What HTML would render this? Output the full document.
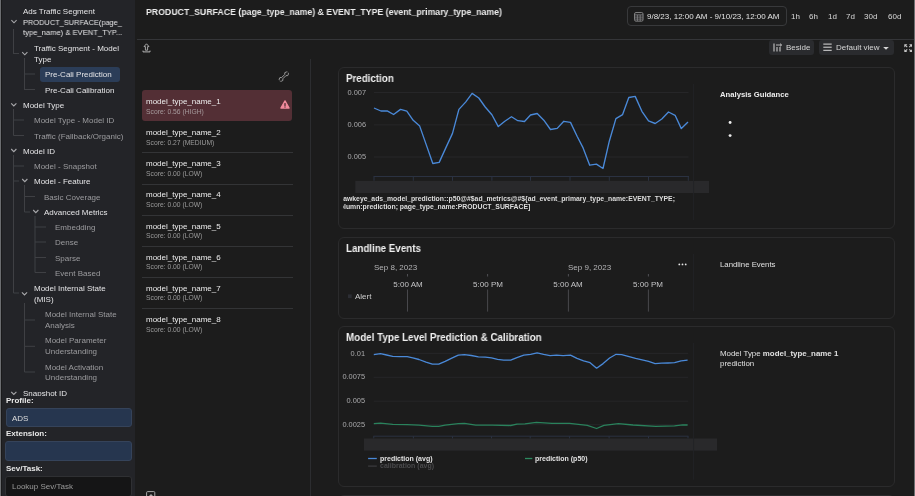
<!DOCTYPE html>
<html><head><meta charset="utf-8"><title>Ads Traffic Segment</title>
<style>
html,body{margin:0;padding:0;width:915px;height:496px;overflow:hidden;background:#1c1c1c}
body{position:relative;font-family:"Liberation Sans",sans-serif}
.t{position:absolute;white-space:pre;will-change:transform}
.r{position:absolute;box-sizing:content-box}
</style></head><body>
<div class="r" style="left:0px;top:0px;width:135.00px;height:496.00px;background:#232428;border-radius:0px;"></div>
<div class="r" style="left:0px;top:0px;width:1.20px;height:496.00px;background:#6b6d70;border-radius:0px;"></div>
<div class="r" style="left:1.2px;top:0px;width:1.00px;height:496.00px;background:#1a1a1b;border-radius:0px;"></div>
<svg class="r" style="left:0;top:0;clip-path:inset(0 0 100.6px 0)" width="135" height="496"><line x1="13.5" y1="29" x2="13.5" y2="54" stroke="#3f4044" stroke-width="1"/><line x1="13.5" y1="53.5" x2="19" y2="53.5" stroke="#3f4044" stroke-width="1"/><line x1="24.5" y1="58" x2="24.5" y2="90" stroke="#3f4044" stroke-width="1"/><line x1="24.5" y1="74" x2="35" y2="74" stroke="#3f4044" stroke-width="1"/><line x1="24.5" y1="89.5" x2="35" y2="89.5" stroke="#3f4044" stroke-width="1"/><line x1="13.5" y1="109" x2="13.5" y2="135.5" stroke="#3f4044" stroke-width="1"/><line x1="13.5" y1="120" x2="24" y2="120" stroke="#3f4044" stroke-width="1"/><line x1="13.5" y1="135.5" x2="24" y2="135.5" stroke="#3f4044" stroke-width="1"/><line x1="13.5" y1="155" x2="13.5" y2="293" stroke="#3f4044" stroke-width="1"/><line x1="13.5" y1="166" x2="24" y2="166" stroke="#3f4044" stroke-width="1"/><line x1="13.5" y1="181" x2="19" y2="181" stroke="#3f4044" stroke-width="1"/><line x1="13.5" y1="293" x2="19" y2="293" stroke="#3f4044" stroke-width="1"/><line x1="24.5" y1="185" x2="24.5" y2="212" stroke="#3f4044" stroke-width="1"/><line x1="24.5" y1="196.5" x2="35" y2="196.5" stroke="#3f4044" stroke-width="1"/><line x1="24.5" y1="212" x2="30" y2="212" stroke="#3f4044" stroke-width="1"/><line x1="35" y1="216" x2="35" y2="272.5" stroke="#3f4044" stroke-width="1"/><line x1="35" y1="227" x2="46" y2="227" stroke="#3f4044" stroke-width="1"/><line x1="35" y1="242" x2="46" y2="242" stroke="#3f4044" stroke-width="1"/><line x1="35" y1="257.5" x2="46" y2="257.5" stroke="#3f4044" stroke-width="1"/><line x1="35" y1="272.5" x2="46" y2="272.5" stroke="#3f4044" stroke-width="1"/><line x1="24.5" y1="303" x2="24.5" y2="372" stroke="#3f4044" stroke-width="1"/><line x1="24.5" y1="320" x2="35" y2="320" stroke="#3f4044" stroke-width="1"/><line x1="24.5" y1="346.3" x2="35" y2="346.3" stroke="#3f4044" stroke-width="1"/><line x1="24.5" y1="372" x2="35" y2="372" stroke="#3f4044" stroke-width="1"/><path d="M11.4,20.1 L14,22.8 L16.6,20.1" fill="none" stroke="#a8a8ab" stroke-width="1.1"/><path d="M22.2,52.1 L24.8,54.800000000000004 L27.400000000000002,52.1" fill="none" stroke="#a8a8ab" stroke-width="1.1"/><path d="M11.200000000000001,103.3 L13.8,106.0 L16.400000000000002,103.3" fill="none" stroke="#a8a8ab" stroke-width="1.1"/><path d="M11.200000000000001,149.0 L13.8,151.7 L16.400000000000002,149.0" fill="none" stroke="#a8a8ab" stroke-width="1.1"/><path d="M22.2,179.0 L24.8,181.7 L27.400000000000002,179.0" fill="none" stroke="#a8a8ab" stroke-width="1.1"/><path d="M33.199999999999996,210.0 L35.8,212.7 L38.4,210.0" fill="none" stroke="#a8a8ab" stroke-width="1.1"/><path d="M21.9,292.3 L24.5,295.0 L27.1,292.3" fill="none" stroke="#a8a8ab" stroke-width="1.1"/><path d="M11.200000000000001,391.8 L13.8,394.5 L16.400000000000002,391.8" fill="none" stroke="#a8a8ab" stroke-width="1.1"/></svg>
<div class="r" style="left:40px;top:67px;width:79.50px;height:14.60px;background:#2b3d58;border-radius:3px;"></div>
<div class="t" style="left:22.8px;top:6.98px;font-size:8px;line-height:9.6px;font-weight:normal;color:#e4e4e6;">Ads Traffic Segment</div>
<div class="t" style="left:22.8px;top:17.88px;font-size:8px;line-height:9.6px;font-weight:normal;color:#e4e4e6;transform:scaleX(0.927);transform-origin:0 0">PRODUCT_SURFACE(page_</div>
<div class="t" style="left:22.8px;top:28.48px;font-size:8px;line-height:9.6px;font-weight:normal;color:#e4e4e6;transform:scaleX(0.952);transform-origin:0 0">type_name) &amp; EVENT_TYP...</div>
<div class="t" style="left:33.9px;top:44.18px;font-size:8px;line-height:9.6px;font-weight:normal;color:#e4e4e6;">Traffic Segment - Model</div>
<div class="t" style="left:33.9px;top:55.18px;font-size:8px;line-height:9.6px;font-weight:normal;color:#e4e4e6;">Type</div>
<div class="t" style="left:44.9px;top:70.18px;font-size:8px;line-height:9.6px;font-weight:normal;color:#e4e4e6;">Pre-Cali Prediction</div>
<div class="t" style="left:44.9px;top:85.68px;font-size:8px;line-height:9.6px;font-weight:normal;color:#e4e4e6;">Pre-Cali Calibration</div>
<div class="t" style="left:22.7px;top:101.28px;font-size:8px;line-height:9.6px;font-weight:normal;color:#e4e4e6;">Model Type</div>
<div class="t" style="left:33.6px;top:116.28px;font-size:8px;line-height:9.6px;font-weight:normal;color:#9c9c9f;">Model Type - Model ID</div>
<div class="t" style="left:33.6px;top:131.78px;font-size:8px;line-height:9.6px;font-weight:normal;color:#9c9c9f;">Traffic (Fallback/Organic)</div>
<div class="t" style="left:22.7px;top:147.18px;font-size:8px;line-height:9.6px;font-weight:normal;color:#e4e4e6;">Model ID</div>
<div class="t" style="left:33.6px;top:162.18px;font-size:8px;line-height:9.6px;font-weight:normal;color:#9c9c9f;">Model - Snapshot</div>
<div class="t" style="left:33.7px;top:177.18px;font-size:8px;line-height:9.6px;font-weight:normal;color:#e4e4e6;">Model - Feature</div>
<div class="t" style="left:44.3px;top:192.58px;font-size:8px;line-height:9.6px;font-weight:normal;color:#9c9c9f;">Basic Coverage</div>
<div class="t" style="left:44.3px;top:207.68px;font-size:8px;line-height:9.6px;font-weight:normal;color:#e4e4e6;">Advanced Metrics</div>
<div class="t" style="left:55.4px;top:223.18px;font-size:8px;line-height:9.6px;font-weight:normal;color:#9c9c9f;">Embedding</div>
<div class="t" style="left:55.4px;top:238.18px;font-size:8px;line-height:9.6px;font-weight:normal;color:#9c9c9f;">Dense</div>
<div class="t" style="left:55.4px;top:253.58px;font-size:8px;line-height:9.6px;font-weight:normal;color:#9c9c9f;">Sparse</div>
<div class="t" style="left:55.4px;top:268.58px;font-size:8px;line-height:9.6px;font-weight:normal;color:#9c9c9f;">Event Based</div>
<div class="t" style="left:33.5px;top:283.78px;font-size:8px;line-height:9.6px;font-weight:normal;color:#e4e4e6;">Model Internal State</div>
<div class="t" style="left:33.5px;top:295.38px;font-size:8px;line-height:9.6px;font-weight:normal;color:#e4e4e6;">(MIS)</div>
<div class="t" style="left:44.8px;top:310.18px;font-size:8px;line-height:9.6px;font-weight:normal;color:#9c9c9f;">Model Internal State</div>
<div class="t" style="left:44.8px;top:321.18px;font-size:8px;line-height:9.6px;font-weight:normal;color:#9c9c9f;">Analysis</div>
<div class="t" style="left:44.8px;top:336.18px;font-size:8px;line-height:9.6px;font-weight:normal;color:#9c9c9f;">Model Parameter</div>
<div class="t" style="left:44.8px;top:346.98px;font-size:8px;line-height:9.6px;font-weight:normal;color:#9c9c9f;">Understanding</div>
<div class="t" style="left:44.8px;top:362.68px;font-size:8px;line-height:9.6px;font-weight:normal;color:#9c9c9f;">Model Activation</div>
<div class="t" style="left:44.8px;top:373.48px;font-size:8px;line-height:9.6px;font-weight:normal;color:#9c9c9f;">Understanding</div>
<div class="r" style="left:0;top:380px;width:135px;height:15.5px;overflow:hidden"><div class="t" style="left:22.7px;top:9.48px;font-size:8px;line-height:9.6px;font-weight:normal;color:#e4e4e6;">Snapshot ID</div></div>
<div class="t" style="left:5.5px;top:395.88px;font-size:8px;line-height:9.6px;font-weight:bold;color:#e8e8e8;">Profile:</div>
<div class="r" style="left:5.5px;top:408.3px;width:124.30px;height:17.10px;background:#26364f;border:1px solid #35435a;border-radius:3px;"></div>
<div class="t" style="left:11.9px;top:413.98px;font-size:8px;line-height:9.6px;font-weight:normal;color:#dcdcdc;">ADS</div>
<div class="t" style="left:5.6px;top:428.98px;font-size:8px;line-height:9.6px;font-weight:bold;color:#e8e8e8;">Extension:</div>
<div class="r" style="left:5.4px;top:441px;width:124.50px;height:17.60px;background:#26364f;border:1px solid #35435a;border-radius:3px;"></div>
<div class="t" style="left:5.6px;top:463.78px;font-size:8px;line-height:9.6px;font-weight:bold;color:#e8e8e8;">Sev/Task:</div>
<div class="r" style="left:5.4px;top:476.3px;width:124.50px;height:18.70px;background:#151516;border:1px solid #2f3033;border-radius:3px;"></div>
<div class="t" style="left:11.9px;top:482.18px;font-size:8px;line-height:9.6px;font-weight:normal;color:#9a9a9a;">Lookup Sev/Task</div>
<div class="r" style="left:135px;top:0px;width:780.00px;height:496.00px;background:#1c1c1c;border-radius:0px;"></div>
<div class="r" style="left:913.8px;top:0px;width:1.20px;height:496.00px;background:#6d6e70;border-radius:0px;"></div>
<div class="r" style="left:137px;top:39px;width:776.80px;height:1.00px;background:#343538;border-radius:0px;"></div>
<div class="t" style="left:146px;top:6.11px;font-size:9.5px;line-height:11.4px;font-weight:bold;color:#ececec;transform:scaleX(0.921);transform-origin:0 0">PRODUCT_SURFACE (page_type_name) &amp; EVENT_TYPE (event_primary_type_name)</div>
<div class="r" style="left:626.5px;top:6.3px;width:158.50px;height:18.10px;background:none;border:1px solid #38393b;border-radius:4px;"></div>
<svg class="r" style="left:633.5px;top:12px" width="10" height="10" viewBox="0 0 10 10"><rect x="0.55" y="0.55" width="8.5" height="8.6" rx="1.4" fill="none" stroke="#8e8e90" stroke-width="0.9"/><line x1="0.6" y1="2.9" x2="9" y2="2.9" stroke="#8e8e90" stroke-width="0.8"/><line x1="0.6" y1="5.1" x2="9" y2="5.1" stroke="#8e8e90" stroke-width="0.7"/><line x1="0.6" y1="7.1" x2="9" y2="7.1" stroke="#8e8e90" stroke-width="0.7"/><line x1="3.4" y1="2.9" x2="3.4" y2="9" stroke="#8e8e90" stroke-width="0.7"/><line x1="6.2" y1="2.9" x2="6.2" y2="9" stroke="#8e8e90" stroke-width="0.7"/></svg>
<div class="t" style="left:646.8px;top:11.98px;font-size:8px;line-height:9.6px;font-weight:normal;color:#e2e2e2;">9/8/23, 12:00 AM - 9/10/23, 12:00 AM</div>
<div class="t" style="left:791.4px;top:11.98px;font-size:8px;line-height:9.6px;font-weight:normal;color:#d8d8d8;">1h</div>
<div class="t" style="left:808.8px;top:11.98px;font-size:8px;line-height:9.6px;font-weight:normal;color:#d8d8d8;">6h</div>
<div class="t" style="left:827.8px;top:11.98px;font-size:8px;line-height:9.6px;font-weight:normal;color:#d8d8d8;">1d</div>
<div class="t" style="left:845.6px;top:11.98px;font-size:8px;line-height:9.6px;font-weight:normal;color:#d8d8d8;">7d</div>
<div class="t" style="left:864.2px;top:11.98px;font-size:8px;line-height:9.6px;font-weight:normal;color:#d8d8d8;">30d</div>
<div class="t" style="left:888px;top:11.98px;font-size:8px;line-height:9.6px;font-weight:normal;color:#d8d8d8;">60d</div>
<svg class="r" style="left:141.5px;top:42.5px" width="9" height="10" viewBox="0 0 9 10"><path d="M4.5,0.8 L7,3.6 L5.6,3.6 L5.6,7.2 L3.4,7.2 L3.4,3.6 L2,3.6 Z" fill="none" stroke="#b5b5b5" stroke-width="0.9" stroke-linejoin="round"/><path d="M1,7.6 L1,8.9 L8,8.9 L8,7.6" fill="none" stroke="#b5b5b5" stroke-width="1"/></svg>
<div class="r" style="left:768.6px;top:40.1px;width:45.60px;height:14.80px;background:#2a2b2e;border-radius:3px;"></div>
<svg class="r" style="left:772.5px;top:43px" width="10" height="9" viewBox="0 0 10 9"><line x1="1" y1="0.5" x2="1" y2="8.5" stroke="#c8c8c8" stroke-width="1.1"/><line x1="4" y1="4" x2="4" y2="8.5" stroke="#c8c8c8" stroke-width="1.1"/><line x1="7" y1="4" x2="7" y2="8.5" stroke="#c8c8c8" stroke-width="1.1"/><path d="M3,2 L8.5,2 M7,0.6 L8.6,2 L7,3.4" fill="none" stroke="#c8c8c8" stroke-width="0.9"/></svg>
<div class="t" style="left:785.8px;top:43.48px;font-size:8px;line-height:9.6px;font-weight:normal;color:#d6d6d6;">Beside</div>
<div class="r" style="left:819px;top:40.1px;width:75.20px;height:14.80px;background:#2a2b2e;border-radius:3px;"></div>
<svg class="r" style="left:822.5px;top:43px" width="9" height="8" viewBox="0 0 9 8"><line x1="0.3" y1="1.1" x2="8.7" y2="1.1" stroke="#dcdcdc" stroke-width="1"/><line x1="0.3" y1="4.2" x2="8.7" y2="4.2" stroke="#dcdcdc" stroke-width="1"/><line x1="0.3" y1="7.3" x2="8.7" y2="7.3" stroke="#dcdcdc" stroke-width="1"/></svg>
<div class="t" style="left:835.8px;top:43.48px;font-size:8px;line-height:9.6px;font-weight:normal;color:#d6d6d6;">Default view</div>
<svg class="r" style="left:883px;top:46.5px" width="6" height="3" viewBox="0 0 6 3"><path d="M0.2,0 L5.8,0 L3,2.8 Z" fill="#d6d6d6"/></svg>
<svg class="r" style="left:903.5px;top:43.5px" width="8.5" height="8.5" viewBox="0 0 8.5 8.5"><path d="M0.3,0.3 L3.4,0.3 L0.3,3.4 Z M8.2,0.3 L5.1,0.3 L8.2,3.4 Z M8.2,8.2 L5.1,8.2 L8.2,5.1 Z M0.3,8.2 L3.4,8.2 L0.3,5.1 Z" fill="#c8c8c8"/><path d="M1.4,1.4 L3.2,3.2 M7.1,1.4 L5.3,3.2 M7.1,7.1 L5.3,5.3 M1.4,7.1 L3.2,5.3" stroke="#c8c8c8" stroke-width="1.1"/></svg>
<div class="r" style="left:310px;top:59px;width:1.00px;height:437.00px;background:#2c2d30;border-radius:0px;"></div>
<svg class="r" style="left:278px;top:71px" width="11" height="11" viewBox="0 0 11 11"><g transform="translate(5.8,5.6) rotate(-45)"><path d="M-2.2,-0.85 L2.2,-0.85 A1.9,1.9 0 1 1 2.2,0.85 L-2.2,0.85 A1.9,1.9 0 1 1 -2.2,-0.85 Z" fill="none" stroke="#a6a6a6" stroke-width="0.85"/><rect x="4.6" y="-0.55" width="2" height="1.1" fill="#1c1c1c"/><rect x="-6.6" y="-0.55" width="2" height="1.1" fill="#1c1c1c"/></g></svg>
<div class="r" style="left:141.9px;top:89.5px;width:150.60px;height:31.30px;background:#532f35;border-radius:3px;"></div>
<svg class="r" style="left:279.5px;top:99.5px" width="10" height="9" viewBox="0 0 10 9"><path d="M5,0.9 L9.1,8.0 L0.9,8.0 Z" fill="#f08a9c" stroke="#f08a9c" stroke-width="1.3" stroke-linejoin="round"/><rect x="4.35" y="3.0" width="1.3" height="3.0" rx="0.5" fill="#4a2a30"/><circle cx="5" cy="7" r="0.7" fill="#4a2a30"/></svg>
<div class="t" style="left:146px;top:96.98px;font-size:8px;line-height:9.6px;font-weight:normal;color:#ececec;">model_type_name_1</div>
<div class="t" style="left:146px;top:107.56px;font-size:6.75px;line-height:8.1px;font-weight:normal;color:#a69a9c;">Score: 0.56 (HIGH)</div>
<div class="t" style="left:146px;top:128.13px;font-size:8px;line-height:9.6px;font-weight:normal;color:#ececec;">model_type_name_2</div>
<div class="t" style="left:146px;top:138.71px;font-size:6.75px;line-height:8.1px;font-weight:normal;color:#9a9a9a;">Score: 0.27 (MEDIUM)</div>
<div class="r" style="left:141.8px;top:152.35px;width:150.90px;height:1.00px;background:#333436;border-radius:0px;"></div>
<div class="t" style="left:146px;top:159.28px;font-size:8px;line-height:9.6px;font-weight:normal;color:#ececec;">model_type_name_3</div>
<div class="t" style="left:146px;top:169.86px;font-size:6.75px;line-height:8.1px;font-weight:normal;color:#9a9a9a;">Score: 0.00 (LOW)</div>
<div class="r" style="left:141.8px;top:183.5px;width:150.90px;height:1.00px;background:#333436;border-radius:0px;"></div>
<div class="t" style="left:146px;top:190.43px;font-size:8px;line-height:9.6px;font-weight:normal;color:#ececec;">model_type_name_4</div>
<div class="t" style="left:146px;top:201.01px;font-size:6.75px;line-height:8.1px;font-weight:normal;color:#9a9a9a;">Score: 0.00 (LOW)</div>
<div class="r" style="left:141.8px;top:214.65px;width:150.90px;height:1.00px;background:#333436;border-radius:0px;"></div>
<div class="t" style="left:146px;top:221.58px;font-size:8px;line-height:9.6px;font-weight:normal;color:#ececec;">model_type_name_5</div>
<div class="t" style="left:146px;top:232.16px;font-size:6.75px;line-height:8.1px;font-weight:normal;color:#9a9a9a;">Score: 0.00 (LOW)</div>
<div class="r" style="left:141.8px;top:245.79999999999998px;width:150.90px;height:1.00px;background:#333436;border-radius:0px;"></div>
<div class="t" style="left:146px;top:252.73px;font-size:8px;line-height:9.6px;font-weight:normal;color:#ececec;">model_type_name_6</div>
<div class="t" style="left:146px;top:263.31px;font-size:6.75px;line-height:8.1px;font-weight:normal;color:#9a9a9a;">Score: 0.00 (LOW)</div>
<div class="r" style="left:141.8px;top:276.95px;width:150.90px;height:1.00px;background:#333436;border-radius:0px;"></div>
<div class="t" style="left:146px;top:283.88px;font-size:8px;line-height:9.6px;font-weight:normal;color:#ececec;">model_type_name_7</div>
<div class="t" style="left:146px;top:294.46px;font-size:6.75px;line-height:8.1px;font-weight:normal;color:#9a9a9a;">Score: 0.00 (LOW)</div>
<div class="r" style="left:141.8px;top:308.09999999999997px;width:150.90px;height:1.00px;background:#333436;border-radius:0px;"></div>
<div class="t" style="left:146px;top:315.03px;font-size:8px;line-height:9.6px;font-weight:normal;color:#ececec;">model_type_name_8</div>
<div class="t" style="left:146px;top:325.61px;font-size:6.75px;line-height:8.1px;font-weight:normal;color:#9a9a9a;">Score: 0.00 (LOW)</div>
<svg class="r" style="left:145.5px;top:490.5px" width="10" height="6" viewBox="0 0 10 6"><rect x="0.6" y="0.6" width="8.2" height="8" rx="1" fill="none" stroke="#a8a8a8" stroke-width="1"/><path d="M5,3 L7,5 L3,5 Z" fill="#a8a8a8"/></svg>
<div class="r" style="left:338px;top:67.1px;width:555.20px;height:159.90px;background:#1c1c1c;border:1px solid #2b2b2c;border-radius:6px;"></div>
<div class="r" style="left:338px;top:237.3px;width:555.20px;height:79.40px;background:#1c1c1c;border:1px solid #2b2b2c;border-radius:6px;"></div>
<div class="r" style="left:338px;top:325.8px;width:555.20px;height:159.70px;background:#1c1c1c;border:1px solid #2b2b2c;border-radius:6px;"></div>
<div class="r" style="left:338px;top:494.6px;width:555.20px;height:63.40px;background:#1c1c1c;border:1px solid #2b2b2c;border-radius:6px;"></div>
<div class="t" style="left:345.8px;top:72.36px;font-size:10.5px;line-height:12.6px;font-weight:bold;color:#f0f0f0;transform:scaleX(0.93);transform-origin:0 0">Prediction</div>
<div class="t" style="left:305.5px;top:88.95px;font-size:7.4px;line-height:8.88px;font-weight:normal;color:#a9a9ab;width:60px;text-align:right">0.007</div>
<div class="t" style="left:305.5px;top:120.85px;font-size:7.4px;line-height:8.88px;font-weight:normal;color:#a9a9ab;width:60px;text-align:right">0.006</div>
<div class="t" style="left:305.5px;top:153.05px;font-size:7.4px;line-height:8.88px;font-weight:normal;color:#a9a9ab;width:60px;text-align:right">0.005</div>
<svg class="r" style="left:0;top:0" width="915" height="496"><line x1="374" y1="92.5" x2="688.5" y2="92.5" stroke="#262628" stroke-width="1"/><line x1="374" y1="124.9" x2="688.5" y2="124.9" stroke="#262628" stroke-width="1"/><line x1="374" y1="157" x2="688.5" y2="157" stroke="#262628" stroke-width="1"/><line x1="373.5" y1="176.5" x2="689" y2="176.5" stroke="#2b3242" stroke-width="1"/><line x1="374" y1="176.5" x2="374" y2="180.8" stroke="#2b3242" stroke-width="1"/><line x1="413.3" y1="176.5" x2="413.3" y2="180.8" stroke="#2b3242" stroke-width="1"/><line x1="452.5" y1="176.5" x2="452.5" y2="180.8" stroke="#2b3242" stroke-width="1"/><line x1="491.9" y1="176.5" x2="491.9" y2="180.8" stroke="#2b3242" stroke-width="1"/><line x1="530.5" y1="176.5" x2="530.5" y2="180.8" stroke="#2b3242" stroke-width="1"/><line x1="570" y1="176.5" x2="570" y2="180.8" stroke="#2b3242" stroke-width="1"/><line x1="609.3" y1="176.5" x2="609.3" y2="180.8" stroke="#2b3242" stroke-width="1"/><line x1="648.5" y1="176.5" x2="648.5" y2="180.8" stroke="#2b3242" stroke-width="1"/><line x1="688.3" y1="176.5" x2="688.3" y2="180.8" stroke="#2b3242" stroke-width="1"/><rect x="355.3" y="180.9" width="353.7" height="12.1" fill="#29292b"/><line x1="693.6" y1="84" x2="693.6" y2="220" stroke="#222326" stroke-width="1"/><polyline points="374.0,108.0 380.9,111.0 387.2,110.9 393.6,114.5 400.5,109.4 406.8,111.2 413.2,120.3 419.7,126.1 426.2,144.6 432.8,163.5 439.2,162.4 445.8,147.9 452.5,133.4 458.9,109.4 465.6,102.1 472.1,93.4 478.8,98.0 485.2,107.0 491.9,114.8 498.3,126.6 504.8,121.2 511.5,116.7 517.8,120.7 524.5,121.5 530.5,115.0 537.2,113.5 543.8,120.2 550.5,129.5 557.2,128.4 563.8,121.3 570.5,122.4 577.1,136.3 583.1,147.9 589.7,165.2 596.4,164.1 603.0,168.5 609.3,141.2 615.9,118.6 622.6,114.6 628.8,97.5 635.2,96.4 641.9,111.3 648.5,120.8 655.2,123.5 661.8,119.0 668.5,112.0 675.1,115.3 681.3,128.6 688.0,121.9" fill="none" stroke="#4a89d8" stroke-width="1.35" stroke-linejoin="round"/></svg>
<div class="r" style="left:342.8px;top:194px;width:350px;height:20px;overflow:hidden"><div class="t" style="left:-4.300000000000011px;top:0.77px;font-size:6.85px;line-height:8.22px;font-weight:bold;color:#dedede;">hawkeye_ads_model_prediction::p50@#$ad_metrics@#${ad_event_primary_type_name:EVENT_TYPE;</div><div class="t" style="left:-6.5px;top:9.07px;font-size:6.85px;line-height:8.22px;font-weight:bold;color:#dedede;">column:prediction; page_type_name:PRODUCT_SURFACE]</div></div>
<div class="t" style="left:719.9px;top:90.46px;font-size:7.7px;line-height:9.24px;font-weight:bold;color:#ececec;">Analysis Guidance</div>
<svg class="r" style="left:725px;top:118px" width="10" height="22"><circle cx="5.1" cy="4.5" r="1.45" fill="#ececec"/><circle cx="5.1" cy="17.6" r="1.45" fill="#ececec"/></svg>
<div class="t" style="left:345.9px;top:242.16px;font-size:10.5px;line-height:12.6px;font-weight:bold;color:#f0f0f0;transform:scaleX(0.93);transform-origin:0 0">Landline Events</div>
<div class="t" style="left:374px;top:263.08px;font-size:8px;line-height:9.6px;font-weight:normal;color:#b4b4b6;">Sep 8, 2023</div>
<div class="t" style="left:568.4px;top:262.88px;font-size:8px;line-height:9.6px;font-weight:normal;color:#b4b4b6;">Sep 9, 2023</div>
<div class="t" style="left:367.5px;top:279.98px;font-size:8px;line-height:9.6px;font-weight:normal;color:#c4c4c6;width:80px;text-align:center">5:00 AM</div>
<div class="t" style="left:447.6px;top:279.98px;font-size:8px;line-height:9.6px;font-weight:normal;color:#c4c4c6;width:80px;text-align:center">5:00 PM</div>
<div class="t" style="left:528.4px;top:279.98px;font-size:8px;line-height:9.6px;font-weight:normal;color:#c4c4c6;width:80px;text-align:center">5:00 AM</div>
<div class="t" style="left:608.4px;top:279.98px;font-size:8px;line-height:9.6px;font-weight:normal;color:#c4c4c6;width:80px;text-align:center">5:00 PM</div>
<svg class="r" style="left:0;top:0" width="915" height="496"><line x1="407.5" y1="274" x2="407.5" y2="276.5" stroke="#505054" stroke-width="1"/><line x1="407.5" y1="289.5" x2="407.5" y2="311.6" stroke="#48484c" stroke-width="1"/><line x1="487.6" y1="274" x2="487.6" y2="276.5" stroke="#505054" stroke-width="1"/><line x1="487.6" y1="289.5" x2="487.6" y2="311.6" stroke="#48484c" stroke-width="1"/><line x1="568.4" y1="274" x2="568.4" y2="276.5" stroke="#505054" stroke-width="1"/><line x1="568.4" y1="289.5" x2="568.4" y2="311.6" stroke="#48484c" stroke-width="1"/><line x1="648.4" y1="274" x2="648.4" y2="276.5" stroke="#505054" stroke-width="1"/><line x1="648.4" y1="289.5" x2="648.4" y2="311.6" stroke="#48484c" stroke-width="1"/><line x1="693.6" y1="254" x2="693.6" y2="311" stroke="#222326" stroke-width="1"/><rect x="348" y="294.4" width="3.7" height="3.7" fill="#2c2e34"/><circle cx="679.3" cy="264.4" r="0.9" fill="#e6e6e6"/><circle cx="682.5" cy="264.4" r="0.9" fill="#e6e6e6"/><circle cx="685.7" cy="264.4" r="0.9" fill="#e6e6e6"/></svg>
<div class="t" style="left:354.6px;top:292.08px;font-size:8px;line-height:9.6px;font-weight:normal;color:#d0d0d0;">Alert</div>
<div class="t" style="left:719.7px;top:259.97px;font-size:7.8px;line-height:9.36px;font-weight:normal;color:#e0e0e0;">Landline Events</div>
<div class="t" style="left:345.9px;top:331.36px;font-size:10.5px;line-height:12.6px;font-weight:bold;color:#f0f0f0;transform:scaleX(0.935);transform-origin:0 0">Model Type Level Prediction &amp; Calibration</div>
<div class="t" style="left:305.3px;top:349.55px;font-size:7.4px;line-height:8.88px;font-weight:normal;color:#a9a9ab;width:60px;text-align:right">0.01</div>
<div class="t" style="left:305.3px;top:373.45px;font-size:7.4px;line-height:8.88px;font-weight:normal;color:#a9a9ab;width:60px;text-align:right">0.0075</div>
<div class="t" style="left:305.3px;top:397.45px;font-size:7.4px;line-height:8.88px;font-weight:normal;color:#a9a9ab;width:60px;text-align:right">0.005</div>
<div class="t" style="left:305.3px;top:420.85px;font-size:7.4px;line-height:8.88px;font-weight:normal;color:#a9a9ab;width:60px;text-align:right">0.0025</div>
<svg class="r" style="left:0;top:0" width="915" height="496"><line x1="373.7" y1="353.4" x2="688.2" y2="353.4" stroke="#262628" stroke-width="1"/><line x1="373.7" y1="377.3" x2="688.2" y2="377.3" stroke="#262628" stroke-width="1"/><line x1="373.7" y1="401.2" x2="688.2" y2="401.2" stroke="#262628" stroke-width="1"/><line x1="373.7" y1="424.7" x2="688.2" y2="424.7" stroke="#262628" stroke-width="1"/><line x1="373.3" y1="436.2" x2="688.5" y2="436.2" stroke="#2b3242" stroke-width="1"/><line x1="373.8" y1="436.2" x2="373.8" y2="438.6" stroke="#2b3242" stroke-width="1"/><line x1="413.4" y1="436.2" x2="413.4" y2="438.6" stroke="#2b3242" stroke-width="1"/><line x1="452.5" y1="436.2" x2="452.5" y2="438.6" stroke="#2b3242" stroke-width="1"/><line x1="491.5" y1="436.2" x2="491.5" y2="438.6" stroke="#2b3242" stroke-width="1"/><line x1="530.2" y1="436.2" x2="530.2" y2="438.6" stroke="#2b3242" stroke-width="1"/><line x1="569.6" y1="436.2" x2="569.6" y2="438.6" stroke="#2b3242" stroke-width="1"/><line x1="609.1" y1="436.2" x2="609.1" y2="438.6" stroke="#2b3242" stroke-width="1"/><line x1="648.5" y1="436.2" x2="648.5" y2="438.6" stroke="#2b3242" stroke-width="1"/><line x1="688" y1="436.2" x2="688" y2="438.6" stroke="#2b3242" stroke-width="1"/><rect x="364" y="438.5" width="353" height="12.1" fill="#29292b"/><line x1="693.6" y1="343" x2="693.6" y2="479.6" stroke="#222326" stroke-width="1"/><polyline points="373.8,354.6 380.5,353.7 386.6,355.0 392.7,356.4 399.4,356.7 407.2,356.7 412.8,357.8 419.0,359.5 426.0,362.1 432.4,364.2 438.7,364.2 445.2,361.3 451.8,358.1 458.3,355.1 464.4,354.6 471.4,355.5 478.4,356.9 485.4,357.2 491.5,357.8 497.6,359.3 503.7,360.2 510.7,360.2 516.9,357.6 523.8,355.1 530.6,354.3 537.1,352.8 543.6,354.3 550.1,355.6 556.6,355.2 563.1,355.6 570.5,355.2 577.0,358.4 583.6,360.8 590.1,362.7 596.6,368.2 603.1,363.6 609.6,358.0 616.1,354.3 621.7,354.7 629.1,356.7 635.6,358.4 642.1,359.9 648.6,361.4 655.1,363.6 661.6,363.2 668.1,363.0 674.6,362.7 681.1,360.8 687.6,360.2" fill="none" stroke="#4a89d8" stroke-width="1.3" stroke-linejoin="round"/><polyline points="373.8,423.7 380.5,423.2 392.7,424.3 407.2,424.6 419.0,425.1 432.4,426.4 438.7,426.4 445.2,425.1 458.3,423.7 464.4,423.4 475.8,425.1 492.4,425.1 510.7,425.5 516.9,424.1 525.0,423.9 536.4,422.3 552.0,423.3 569.6,423.3 587.3,425.4 596.6,428.5 603.9,425.4 618.4,423.7 633.0,425.0 655.8,426.4 674.5,425.8 682.8,424.8 687.6,425.0" fill="none" stroke="#2a825c" stroke-width="1.3" stroke-linejoin="round"/><line x1="368.1" y1="458.5" x2="376.8" y2="458.5" stroke="#4a89d8" stroke-width="1.3"/><line x1="368.1" y1="466.1" x2="376.8" y2="466.1" stroke="#3a3a3c" stroke-width="1.3"/><line x1="525" y1="458.5" x2="532.3" y2="458.5" stroke="#2d8a60" stroke-width="1.3"/></svg>
<div class="t" style="left:379.7px;top:454.62px;font-size:7px;line-height:8.4px;font-weight:bold;color:#e2e2e2;">prediction (avg)</div>
<div class="t" style="left:379.7px;top:461.82px;font-size:7px;line-height:8.4px;font-weight:bold;color:#4a4a4c;">calibration (avg)</div>
<div class="t" style="left:535.4px;top:454.52px;font-size:7px;line-height:8.4px;font-weight:bold;color:#e2e2e2;">prediction (p50)</div>
<div class="t" style="left:719.7px;top:348.87px;font-size:7.9px;line-height:9.48px;font-weight:normal;color:#e0e0e0;">Model Type <b>model_type_name 1</b></div>
<div class="t" style="left:719.7px;top:359.47px;font-size:7.9px;line-height:9.48px;font-weight:normal;color:#e0e0e0;">prediction</div>
</body></html>
